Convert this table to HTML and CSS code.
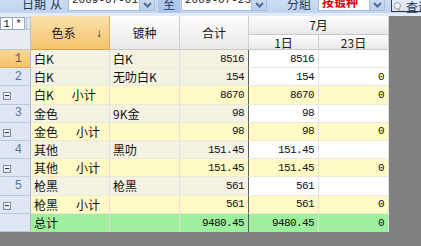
FILE: index.html
```html
<!DOCTYPE html>
<html>
<head>
<meta charset="utf-8">
<link rel="stylesheet" href="styles.css">
</head>
<body>
<div class="toolbar">
  <div class="tb-inner">
    <span class="lbl l-date">日期</span>
    <span class="lbl l-from">从</span>
    <div class="inp i1"><span class="txt">2009-07-01</span><span class="dd"><svg width="9" height="6" viewBox="0 0 9 6"><path d="M1 1 L4.5 4.5 L8 1" fill="none" stroke="#4f6e9a" stroke-width="2.2"/></svg></span></div>
    <span class="lbl l-to">至</span>
    <div class="inp i2"><span class="txt">2009-07-23</span><span class="dd"><svg width="9" height="6" viewBox="0 0 9 6"><path d="M1 1 L4.5 4.5 L8 1" fill="none" stroke="#4f6e9a" stroke-width="2.2"/></svg></span></div>
    <span class="lbl l-grp">分組</span>
    <div class="inp i3"><span class="txt red">按镀种</span><span class="dd"><svg width="9" height="6" viewBox="0 0 9 6"><path d="M1 1 L4.5 4.5 L8 1" fill="none" stroke="#4f6e9a" stroke-width="2.2"/></svg></span></div>
    <div class="btn"><svg width="16" height="16" viewBox="0 0 16 16"><circle cx="7" cy="6" r="5" fill="#eef4fb" stroke="#8c97a6" stroke-width="1.4"/><path d="M8.5 10.5 L11 14" stroke="#c9a24a" stroke-width="2.4"/></svg><span class="btxt">查询</span></div>
  </div>
</div>
<div class="strip"></div>
<div class="grid">
  <div class="h corner"><span class="mini">1</span><span class="mini">*</span><span class="mini sm"></span></div>
  <div class="h hc sorted"><span class="hl">色系</span><span class="arrow">↓</span></div>
  <div class="h hc">镀种</div>
  <div class="h hc">合计</div>
  <div class="h month">7月</div>
  <div class="h day">1日</div>
  <div class="h day">23日</div>

  <div class="c rh sel">1</div><div class="c b">白K</div><div class="c b">白K</div><div class="c b n tot">8516</div><div class="c w n">8516</div><div class="c w n"></div>
  <div class="c rh">2</div><div class="c b">白K</div><div class="c b">无叻白K</div><div class="c b n tot">154</div><div class="c w n">154</div><div class="c w n">0</div>
  <div class="c rh grp"><span class="minus"></span></div><div class="c y">白K<span class="sp">   </span>小计</div><div class="c y"></div><div class="c y n tot">8670</div><div class="c y n">8670</div><div class="c y n">0</div>
  <div class="c rh">3</div><div class="c b">金色</div><div class="c b">9K金</div><div class="c b n tot">98</div><div class="c w n">98</div><div class="c w n"></div>
  <div class="c rh grp"><span class="minus"></span></div><div class="c y">金色<span class="sp">   </span>小计</div><div class="c y"></div><div class="c y n tot">98</div><div class="c y n">98</div><div class="c y n">0</div>
  <div class="c rh">4</div><div class="c b">其他</div><div class="c b">黑叻</div><div class="c b n tot">151.45</div><div class="c w n">151.45</div><div class="c w n"></div>
  <div class="c rh grp"><span class="minus"></span></div><div class="c y">其他<span class="sp">   </span>小计</div><div class="c y"></div><div class="c y n tot">151.45</div><div class="c y n">151.45</div><div class="c y n">0</div>
  <div class="c rh">5</div><div class="c b">枪黑</div><div class="c b">枪黑</div><div class="c b n tot">561</div><div class="c w n">561</div><div class="c w n"></div>
  <div class="c rh grp"><span class="minus"></span></div><div class="c y">枪黑<span class="sp">   </span>小计</div><div class="c y"></div><div class="c y n tot">561</div><div class="c y n">561</div><div class="c y n">0</div>
  <div class="c rh"></div><div class="c g">总计</div><div class="c g"></div><div class="c g n tot">9480.45</div><div class="c g n">9480.45</div><div class="c g n">0</div>
</div>
</body>
</html>
```
FILE: styles.css
```css
* { box-sizing: border-box; }
html, body {
  margin: 0;
  padding: 0;
}
body {
  width: 421px;
  height: 246px;
  overflow: hidden;
  background: #808080;
  font: 12px "Noto Sans CJK SC", "Liberation Sans", sans-serif;
  color: #111;
}

/* toolbar */
.toolbar {
  height: 13px;
  overflow: hidden;
  background: linear-gradient(#cbdcf2, #c2d5ef);
}
.tb-inner {
  display: flex;
  align-items: flex-end;
  height: 24px;
  margin-top: -13px;
  padding-left: 22px;
  white-space: nowrap;
}
.tb-inner > * { flex-shrink: 0; }
.lbl {
  color: #1b355c;
  font-size: 12px;
  line-height: 14px;
  height: 14px;
}
.l-date { width: 28px; }
.l-from { width: 18px; }
.l-to {
  width: 22px;
  height: 26px;
  margin-left: 3px;
  margin-bottom: -2px;
  padding-top: 10px;
  text-align: center;
  background: #afc7ea;
}
.l-grp { width: 31px; margin-left: 20px; }
.inp {
  display: flex;
  height: 22px;
  background: #fff;
  border: 1px solid #a9bfdb;
}
.i1 { width: 87px; }
.i2 { width: 86px; margin-left: 1px; }
.i3 { width: 67px; }
.txt {
  flex: 1;
  padding-left: 3px;
  font: 11px "Liberation Mono", monospace;
  line-height: 20px;
  color: #222;
  overflow: hidden;
}
.txt.red {
  font: bold 12px "Noto Sans CJK SC", sans-serif;
  line-height: 20px;
  color: #e00000;
  padding-top: 2px;
}
.dd {
  width: 15px;
  background: linear-gradient(#dbe6f5, #bccfea);
  border-left: 1px solid #a9bfdb;
  display: flex;
  align-items: flex-start;
  justify-content: center;
  padding-top: 12px;
}
.btn {
  margin-left: 6px;
  width: 40px;
  height: 25px;
  margin-bottom: -1px;
  border: 1px solid #22395c;
  background: linear-gradient(#f5f8fc, #d8e2ef);
  display: flex;
  align-items: flex-start;
  padding-left: 1px;
  padding-top: 11px;
}
.btxt { margin-left: 3px; color: #1b355c; line-height: 14px; padding-top: 1px; }

.strip {
  height: 3px;
  background: #e3ebf6;
}

/* grid */
.grid {
  display: grid;
  width: 389px;
  grid-template-columns: 31px 79px 70px 69px 70px 70px;
  grid-template-rows: 19px 15px repeat(10, 18.2px);
  background: #fff;
}
.h {
  display: flex;
  align-items: center;
  justify-content: center;
  background: linear-gradient(#fdfdfd, #e9e9e9);
  border-right: 1px solid #d0d0d0;
  border-bottom: 1px solid #c8c8c8;
  color: #1a1a1a;
}
.corner {
  grid-row: 1 / 3;
  align-items: flex-start;
  justify-content: flex-start;
  background: #e8edf4;
  border-right: 1px solid #b6c6da;
  padding-top: 1px;
}
.mini {
  width: 13px;
  height: 13px;
  background: #fff;
  border: 1px solid #9aa4b2;
  margin-right: -1px;
  font: 11px "Liberation Mono", monospace;
  line-height: 12px;
  text-align: center;
}
.mini.sm { width: 5px; margin-left: 2px; background: #dfe5ee; border-color: #b8c2d0; }
.hc { grid-row: 1 / 3; }
.sorted {
  background: linear-gradient(#fbe2ad, #f4c26c);
  border-right-color: #e2b061;
  border-bottom-color: #d9a24f;
  padding: 0 3px 0 0;
}
.hl { flex: 1; text-align: center; }
.arrow { width: 10px; font: 12px "Liberation Sans", sans-serif; }
.month { grid-column: 5 / 7; padding-bottom: 1px; }

.c {
  display: flex;
  align-items: center;
  padding: 0 3px;
  white-space: pre;
  overflow: hidden;
  border-right: 1px solid #e0e0e0;
  border-bottom: 1px solid #e8e8e8;
}
.sp {
  font: 10px "Liberation Mono", monospace;
}
.n {
  justify-content: flex-end;
  padding-right: 4px;
  font: 11px "Liberation Mono", monospace;
  letter-spacing: -0.6px;
}
.tot { border-right: 1px solid #5f5f5f; }
.rh {
  background: #dee7f3;
  border-right: 1px solid #a9bdd6;
  border-bottom: 1px solid #b7c9df;
  justify-content: flex-end;
  padding-right: 8px;
  font: 12px "Liberation Mono", monospace;
  color: #5676a2;
}
.rh.sel {
  background: linear-gradient(#fbd896, #f5c269);
  border-bottom-color: #e0aa52;
  color: #6a5a3a;
}
.rh.grp {
  justify-content: flex-start;
  padding-left: 3px;
  padding-top: 3px;
}
.minus {
  position: relative;
  width: 8px;
  height: 8px;
  border: 1px solid #7d8a9c;
  background: linear-gradient(#ffffff, #d9e1ec);
}
.minus::after {
  content: "";
  position: absolute;
  left: 1px;
  top: 2px;
  width: 4px;
  height: 1px;
  background: #2c2c2c;
}
.b { background: #f4f2e3; border-bottom-color: #ecebdc; }
.w { background: #fff; }
.y { background: #fffac6; border-bottom-color: #ecead0; }
.g { background: #9ef09e; border-bottom: none; }
```
